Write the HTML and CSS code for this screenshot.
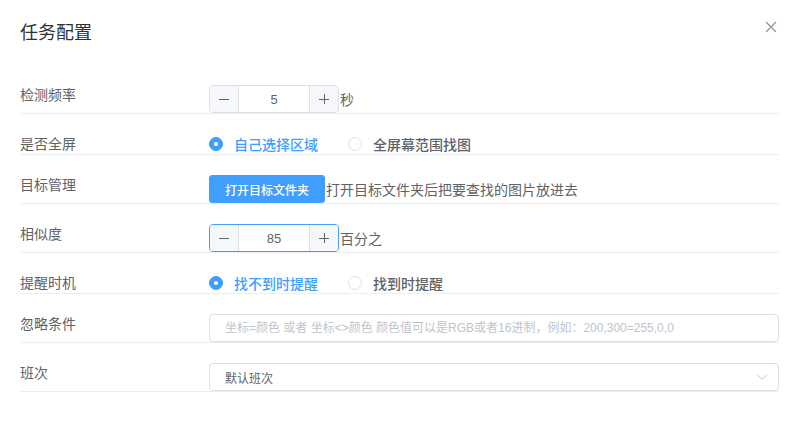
FILE: index.html
```html
<!DOCTYPE html>
<html lang="zh-CN">
<head>
    <meta charset="UTF-8">
    <meta name="viewport" content="width=device-width, initial-scale=1.0">
    <title>任务配置</title>
    <link rel="stylesheet" href="styles.css">
</head>
<body>
    <div class="dialogo">
        <div class="cabecera">
            <span class="titulo">任务配置</span>
            <button class="cerrar" aria-label="关闭">
                <svg width="12" height="12" viewBox="0 0 12 12"><path d="M1 1L11 11M11 1L1 11" stroke="#909399" stroke-width="1.2" fill="none"/></svg>
            </button>
        </div>

        <div class="formulario">
            <div class="fila">
                <label class="etiqueta">检测频率</label>
                <div class="contenido">
                    <div class="numero">
                        <span class="paso"><svg width="12" height="12" viewBox="0 0 12 12"><path d="M1 6.5H11" stroke="#606266" stroke-width="1"/></svg></span>
                        <span class="valor">5</span>
                        <span class="paso mas"><svg width="12" height="12" viewBox="0 0 12 12"><path d="M1 6.5H11M6.5 1V11" stroke="#606266" stroke-width="1"/></svg></span>
                    </div>
                    <span class="sufijo">秒</span>
                </div>
            </div>

            <div class="fila">
                <label class="etiqueta">是否全屏</label>
                <div class="contenido corto">
                    <span class="radio activo"><span class="circulo"></span>自己选择区域</span>
                    <span class="radio"><span class="circulo"></span>全屏幕范围找图</span>
                </div>
            </div>

            <div class="fila">
                <label class="etiqueta">目标管理</label>
                <div class="contenido">
                    <button class="boton">打开目标文件夹</button>
                    <span class="sufijo">打开目标文件夹后把要查找的图片放进去</span>
                </div>
            </div>

            <div class="fila">
                <label class="etiqueta">相似度</label>
                <div class="contenido">
                    <div class="numero enfocado">
                        <span class="paso"><svg width="12" height="12" viewBox="0 0 12 12"><path d="M1 6.5H11" stroke="#606266" stroke-width="1"/></svg></span>
                        <span class="valor">85</span>
                        <span class="paso mas"><svg width="12" height="12" viewBox="0 0 12 12"><path d="M1 6.5H11M6.5 1V11" stroke="#606266" stroke-width="1"/></svg></span>
                    </div>
                    <span class="sufijo">百分之</span>
                </div>
            </div>

            <div class="fila">
                <label class="etiqueta">提醒时机</label>
                <div class="contenido corto">
                    <span class="radio activo"><span class="circulo"></span>找不到时提醒</span>
                    <span class="radio"><span class="circulo"></span>找到时提醒</span>
                </div>
            </div>

            <div class="fila">
                <label class="etiqueta">忽略条件</label>
                <div class="contenido">
                    <input class="entrada" type="text" placeholder="坐标=颜色 或者 坐标<>颜色 颜色值可以是RGB或者16进制，例如：200,300=255,0,0">
                </div>
            </div>

            <div class="fila">
                <label class="etiqueta">班次</label>
                <div class="contenido">
                    <div class="selector">
                        <span>默认班次</span>
                        <svg width="12" height="8" viewBox="0 0 12 8"><path d="M1 1.5L6 6.5L11 1.5" stroke="#c0c4cc" stroke-width="1" fill="none"/></svg>
                    </div>
                </div>
            </div>
        </div>
    </div>
</body>
</html>
```

FILE: styles.css
```css
body {
    margin: 0;
    background-color: white;
    font-family: "Liberation Sans", "Noto Sans CJK SC", sans-serif;
    color: #606266;
}
.dialogo {
    width: 794px;
    height: 442px;
    background-color: white;
}
.cabecera {
    position: relative;
    padding: 21px 20px 19px 20px;
    line-height: 24px;
}
.titulo {
    font-size: 18px;
    color: #303133;
}
.cerrar {
    position: absolute;
    top: 21px;
    right: 17px;
    width: 12px;
    height: 12px;
    padding: 0;
    border: none;
    background: none;
    display: flex;
    cursor: pointer;
}
.formulario {
    margin: 0 15px 0 20px;
}
.fila {
    display: flex;
    align-items: flex-start;
    padding-top: 20px;
    border-bottom: 1px solid #ebeef5;
}
.etiqueta {
    width: 189px;
    flex-shrink: 0;
    font-size: 14px;
    line-height: 20px;
}
.contenido {
    flex: 1;
    display: flex;
    align-items: center;
    height: 28px;
}
.contenido.corto {
    height: 20px;
}
.numero {
    width: 128px;
    height: 26px;
    border: 1px solid #dcdfe6;
    border-radius: 4px;
    display: flex;
    overflow: hidden;
    font-size: 13px;
}
.numero.enfocado {
    border-color: #409eff;
}
.paso {
    width: 28px;
    background-color: #f5f7fa;
    border-right: 1px solid #dcdfe6;
    display: flex;
    align-items: center;
    justify-content: center;
}
.paso.mas {
    border-right: none;
    border-left: 1px solid #dcdfe6;
}
.valor {
    flex: 1;
    display: flex;
    align-items: center;
    justify-content: center;
    color: #606266;
}
.sufijo {
    font-size: 14px;
    margin-left: 1px;
}
.radio {
    display: flex;
    align-items: center;
    font-size: 14px;
    font-weight: 500;
    margin-right: 30px;
    color: #606266;
}
.circulo {
    width: 12px;
    height: 12px;
    border: 1px solid #dcdfe6;
    border-radius: 50%;
    margin-right: 11px;
    position: relative;
}
.radio.activo {
    color: #409eff;
}
.radio.activo .circulo {
    background-color: #409eff;
    border-color: #409eff;
}
.radio.activo .circulo::after {
    content: "";
    position: absolute;
    width: 4px;
    height: 4px;
    border-radius: 50%;
    background-color: white;
    left: 4px;
    top: 4px;
}
.boton {
    width: 116px;
    height: 28px;
    background-color: #409eff;
    border: 1px solid #409eff;
    border-radius: 3px;
    color: white;
    font-family: inherit;
    font-size: 12px;
    font-weight: 500;
    padding: 0;
}
.entrada {
    width: 100%;
    height: 28px;
    box-sizing: border-box;
    border: 1px solid #dcdfe6;
    border-radius: 4px;
    padding: 0 15px;
    font-family: inherit;
    font-size: 12px;
    color: #606266;
    outline: none;
}
.entrada::placeholder {
    color: #c0c4cc;
}
.selector {
    width: 100%;
    height: 28px;
    box-sizing: border-box;
    border: 1px solid #dcdfe6;
    border-radius: 4px;
    padding: 0 10px 0 15px;
    display: flex;
    align-items: center;
    justify-content: space-between;
    font-size: 12px;
    color: #606266;
}
```
